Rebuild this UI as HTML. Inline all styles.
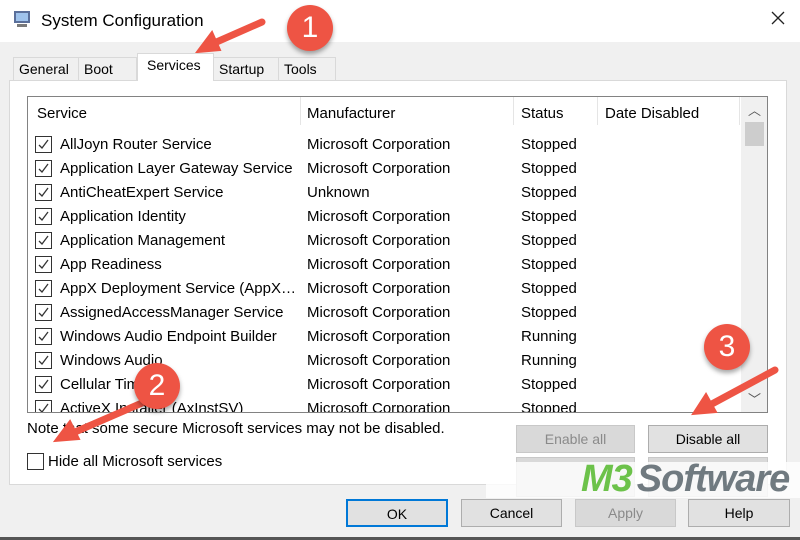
<!DOCTYPE html>
<html><head><meta charset="utf-8"><style>
*{box-sizing:border-box;margin:0;padding:0}
body{width:800px;height:540px;overflow:hidden;background:#f0f0f0;font-family:"Liberation Sans",sans-serif;font-size:14px;color:#000;position:relative}
.a{position:absolute}
.title{left:0;top:0;width:800px;height:42px;background:#fff}
.tab{top:57px;height:24px;border:1px solid #d9d9d9;border-bottom:none;background:#f0f0f0;padding:3px 0 0 5px;font-size:14px}
.panel{left:9px;top:80px;width:778px;height:405px;background:#fff;border:1px solid #d9d9d9}
.list{left:27px;top:96px;width:741px;height:317px;border:1px solid #828282;background:#fff;overflow:hidden}
.row{position:absolute;left:0;height:24px;width:740px;font-size:15px;line-height:17px}
.cb{position:absolute;left:7px;top:2px;width:17px;height:17px;border:1px solid #333;background:#fff}
.cb svg{position:absolute;left:1px;top:1px}
.t{position:absolute;top:2px;white-space:nowrap}
.btn{height:28px;border:1px solid #adadad;background:#e1e1e1;text-align:center;line-height:26px;font-size:14px}
.dis{color:#8a8a8a;background:#d9d9d9;border-color:#c8c8c8}
.circ{width:46px;height:46px;border-radius:50%;background:#ee5444;color:#fff;font-size:30px;text-align:center;line-height:46px;box-shadow:0 3px 5px rgba(0,0,0,.35)}
</style></head><body>
<div class="a title"></div>
<svg class="a" style="left:13px;top:10px" width="18" height="18" viewBox="0 0 18 18"><rect x="1" y="1" width="16" height="12" fill="#5a6f9a"/><rect x="3" y="3" width="12" height="8" fill="#9fc3ec"/><rect x="4" y="14" width="10" height="3" fill="#7a7a7a"/></svg>
<div class="a" style="left:41px;top:11px;font-size:17px">System Configuration</div>
<svg class="a" style="left:771px;top:11px" width="14" height="14"><path d="M1 1L13 13M13 1L1 13" stroke="#222" stroke-width="1.3"/></svg>

<div class="a tab" style="left:13px;width:66px">General</div>
<div class="a tab" style="left:78px;width:59px">Boot</div>
<div class="a tab" style="left:278px;width:58px">Tools</div>
<div class="a tab" style="left:213px;width:66px">Startup</div>
<div class="a panel"></div>
<div class="a tab" style="left:137px;top:53px;width:77px;height:28px;background:#fff;padding-left:9px;border-color:#d9d9d9;z-index:2">Services</div>

<div class="a list" style="font-size:15px">
  <div class="a" style="left:9px;top:8px">Service</div>
  <div class="a" style="left:272px;top:0;width:1px;height:28px;background:#e5e5e5"></div>
  <div class="a" style="left:279px;top:8px">Manufacturer</div>
  <div class="a" style="left:485px;top:0;width:1px;height:28px;background:#e5e5e5"></div>
  <div class="a" style="left:493px;top:8px">Status</div>
  <div class="a" style="left:569px;top:0;width:1px;height:28px;background:#e5e5e5"></div>
  <div class="a" style="left:577px;top:8px">Date Disabled</div>
  <div class="a" style="left:711px;top:0;width:1px;height:28px;background:#e5e5e5"></div>
  <div class="a" style="left:713px;top:0;width:26px;height:316px;background:#f0f0f0"></div>
  <div class="a" style="left:717px;top:25px;width:19px;height:24px;background:#cdcdcd"></div>
  <div class="a" style="left:720px;top:3px;font-size:13px;color:#555">︿</div>
  <div class="a" style="left:720px;top:292px;font-size:13px;color:#555">﹀</div>
  <div id="rows"></div>
</div>

<div class="a" style="left:27px;top:420px;font-size:15px">Note that some secure Microsoft services may not be disabled.</div>
<div class="a" style="left:27px;top:453px;width:17px;height:17px;border:1px solid #333;background:#fff"></div>
<div class="a" style="left:48px;top:453px;font-size:15px">Hide all Microsoft services</div>

<div class="a btn dis" style="left:516px;top:425px;width:119px">Enable all</div>
<div class="a btn" style="left:648px;top:425px;width:120px">Disable all</div>
<div class="a btn dis" style="left:516px;top:457px;width:119px;height:40px"></div>
<div class="a btn dis" style="left:648px;top:457px;width:120px;height:40px"></div>
<div class="a" style="left:486px;top:462px;width:314px;height:36px;background:rgba(255,255,255,.8)"></div>
<div class="a" style="left:581px;top:458px;font-size:38px;font-weight:bold;font-style:italic;letter-spacing:-1px;white-space:nowrap"><span style="color:#6cc24a">M3</span><span style="color:#707a80;margin-left:5px">Software</span></div>

<div class="a btn" style="left:346px;top:499px;width:102px;border:2px solid #0078d7">OK</div>
<div class="a btn" style="left:461px;top:499px;width:101px">Cancel</div>
<div class="a btn dis" style="left:575px;top:499px;width:101px">Apply</div>
<div class="a btn" style="left:688px;top:499px;width:102px">Help</div>
<div class="a" style="left:0;top:537px;width:800px;height:3px;background:#555"></div>

<svg class="a" style="left:0;top:0" width="800" height="540">
<g stroke="#ee5444" stroke-width="7" stroke-linecap="round" fill="#ee5444">
<line x1="262" y1="22" x2="212" y2="44"/><polygon points="197,52 212,32 220,50" stroke-width="2"/>
<line x1="142" y1="403" x2="75" y2="432"/><polygon points="55,441 70,421 79,439" stroke-width="2"/>
<line x1="775" y1="370" x2="710" y2="405"/><polygon points="693,414 706,394 716,412" stroke-width="2"/>
</g></svg>
<div class="a circ" style="left:287px;top:5px">1</div>
<div class="a circ" style="left:134px;top:363px">2</div>
<div class="a circ" style="left:704px;top:324px">3</div>

<script>
var d=[["AllJoyn Router Service","Microsoft Corporation","Stopped"],["Application Layer Gateway Service","Microsoft Corporation","Stopped"],["AntiCheatExpert Service","Unknown","Stopped"],["Application Identity","Microsoft Corporation","Stopped"],["Application Management","Microsoft Corporation","Stopped"],["App Readiness","Microsoft Corporation","Stopped"],["AppX Deployment Service (AppX…","Microsoft Corporation","Stopped"],["AssignedAccessManager Service","Microsoft Corporation","Stopped"],["Windows Audio Endpoint Builder","Microsoft Corporation","Running"],["Windows Audio","Microsoft Corporation","Running"],["Cellular Time","Microsoft Corporation","Stopped"],["ActiveX Installer (AxInstSV)","Microsoft Corporation","Stopped"]];
var h="";d.forEach(function(r,i){h+='<div class="row" style="top:'+(37+i*24)+'px"><div class="cb"><svg width="13" height="13"><polyline points="2,7 5,10 11,2" fill="none" stroke="#333" stroke-width="1.3"/></svg></div><div class="t" style="left:32px">'+r[0]+'</div><div class="t" style="left:279px">'+r[1]+'</div><div class="t" style="left:493px">'+r[2]+'</div></div>'});
document.getElementById("rows").innerHTML=h;
</script>
</body></html>
